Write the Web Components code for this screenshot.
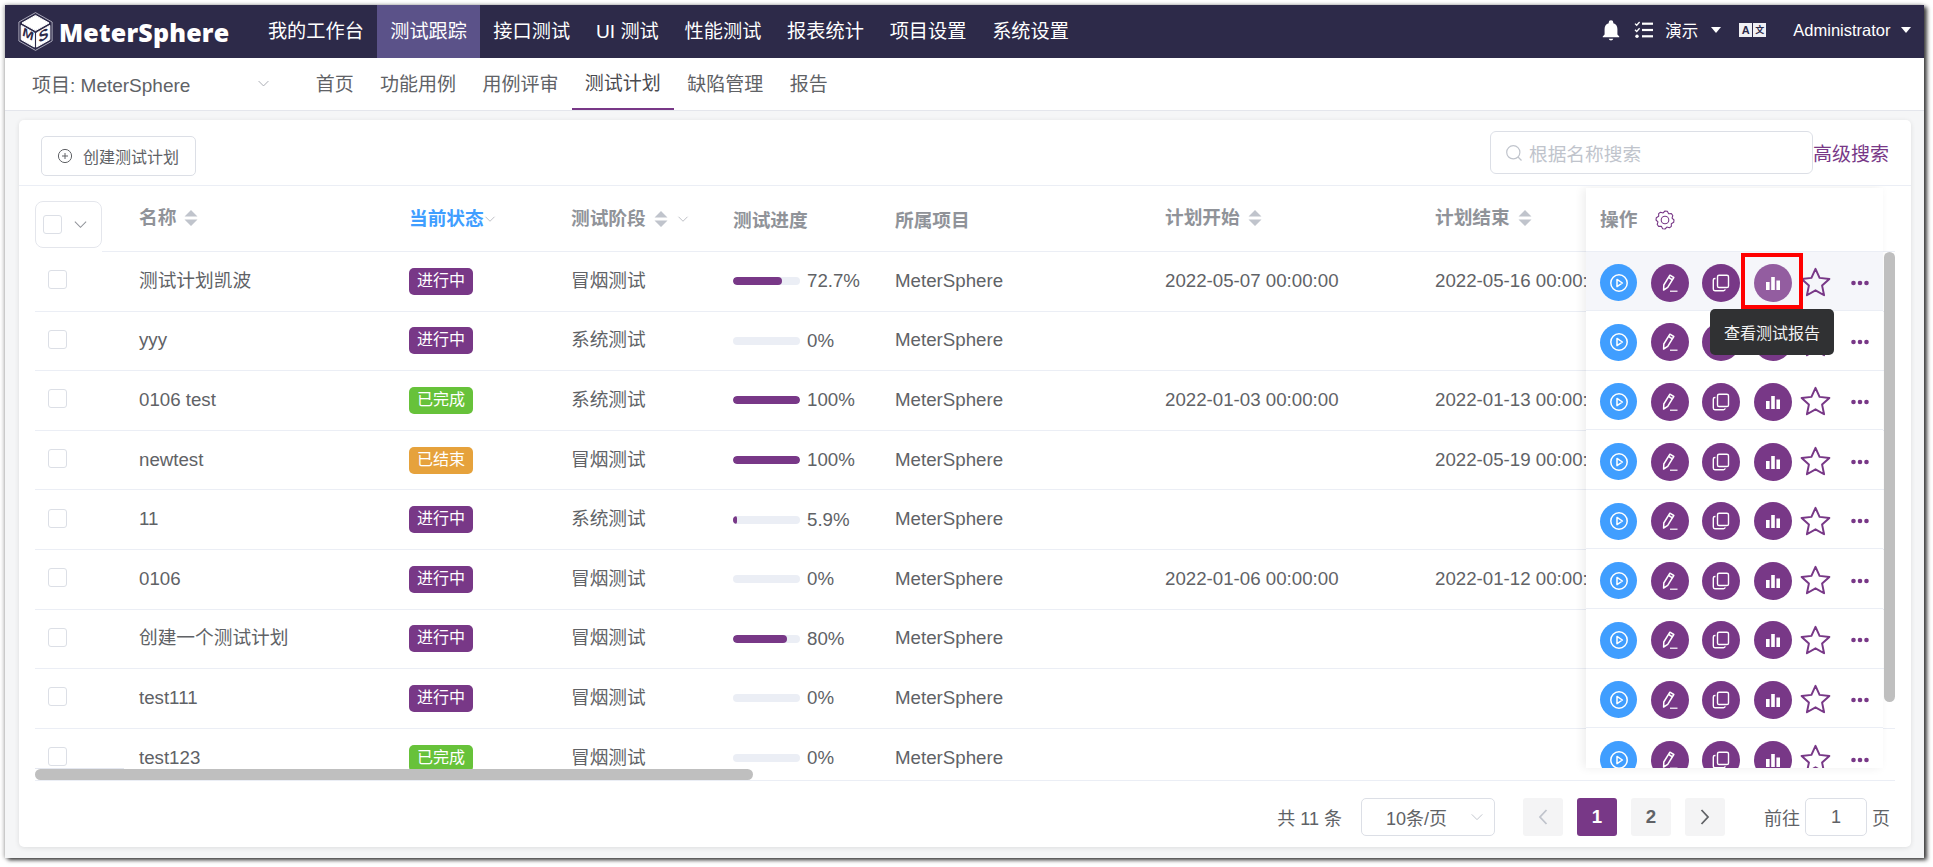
<!DOCTYPE html>
<html lang="zh">
<head>
<meta charset="utf-8">
<title>MeterSphere</title>
<style>
  html, body { margin: 0; height: 867px; overflow: hidden; background: #fff; }
  body { font-family: "Liberation Sans", "Noto Sans CJK SC", sans-serif; color: #606266; }
</style>
</head>
<body>
<ms-app></ms-app>
<script>
(function () {
  const PURPLE = '#783887';

  const chevron = (size, color) => `<svg width="${size}" height="${size}" viewBox="0 0 16 16" fill="none" stroke="${color}" stroke-width="1.1"><path d="M2 5l6 6 6-6"/></svg>`;
  const caret = `<svg width="14" height="16" viewBox="0 0 14 16" fill="#c0c4cc"><path d="M7 0l6.5 6.5H.5zM7 16L.5 9.5h13z"/></svg>`;
  const downTri = `<svg width="12" height="8" viewBox="0 0 12 8" fill="#fff"><path d="M1 1h10L6 7z"/></svg>`;

  const ICONS = {
    play: `<svg width="20" height="20" viewBox="0 0 20 20" fill="none" stroke="#fff" stroke-width="1.5"><circle cx="10" cy="10" r="8.2"/><path d="M8 6.4l5.4 3.6L8 13.6z" stroke-linejoin="round"/></svg>`,
    edit: `<svg width="22" height="22" viewBox="0 0 22 22" fill="none" stroke="#fff" stroke-width="1.5" stroke-linejoin="round"><path d="M4.6 18l.2-5L10.9 3.2l3.9 2.3L8.7 15.4z"/><path d="M9.6 5.5l3.9 2.3"/><path d="M11 19.2h7.5" stroke-width="1.2"/></svg>`,
    copy: `<svg width="20" height="20" viewBox="0 0 20 20" fill="none" stroke="#fff" stroke-width="1.4"><rect x="6.5" y="2.2" width="11" height="12.3" rx="1.6"/><path d="M4.5 5.5h-.6A1.6 1.6 0 0 0 2.3 7.1v9a1.6 1.6 0 0 0 1.6 1.6h8.6a1.6 1.6 0 0 0 1.6-1.5"/></svg>`,
    bars: `<svg width="18" height="18" viewBox="0 0 18 18" fill="#fff"><rect x="2" y="8" width="3.6" height="8"/><rect x="7.2" y="3" width="3.6" height="13"/><rect x="12.4" y="6.5" width="3.6" height="9.5"/></svg>`
  };

  const define = (name, css, html) => {
    class El extends HTMLElement {
      constructor() {
        super();
        this.attachShadow({mode: 'open'});
      }
      connectedCallback() {
        this.shadowRoot.innerHTML = `<style>${css}</style>${typeof html === 'function' ? html(this) : html}`;
      }
    }
    customElements.define(name, El);
  };

  define('ms-logo', `
    :host { display: flex; align-items: center; width: 250px; padding-left: 13px; box-sizing: border-box; }
    span { font: 800 25px "Open Sans", sans-serif; color: #fff; margin-left: 6px; letter-spacing: .2px; }
  `, `
    <svg width="35" height="39" viewBox="0 0 35 39">
      <path d="M17.5.6l16.6 9.4v19L17.5 38.4.9 29V10z" fill="none" stroke="#c9c8d6" stroke-width=".8"/>
      <path d="M17.5 3.4L31 11 17.5 18.6 4 11z" fill="#fff" stroke="#fff" stroke-linejoin="round"/>
      <path d="M3.2 13.4l13.2 7.5v14.2L3.2 27.6z" fill="#fff" stroke="#fff" stroke-linejoin="round"/>
      <path d="M31.8 13.4l-13.2 7.5v14.2l13.2-7.5z" fill="#fff" stroke="#fff" stroke-linejoin="round"/>
      <text transform="matrix(1 .55 0 1 4.4 23.6)" font-family="Liberation Sans" font-weight="700" font-style="italic" font-size="13" fill="#2d2a49">M</text>
      <text transform="matrix(1 -.55 0 1 20.6 31)" font-family="Liberation Sans" font-weight="700" font-size="15" fill="#2d2a49">S</text>
    </svg>
    <span>MeterSphere</span>
  `);

  define('ms-nav-item', `
    :host { display: flex; align-items: center; padding: 0 12.9px 3px; font-size: 19.2px; color: #fff; }
    :host([active]) { background: #5b5289; padding: 0 13.5px 3px; }
  `, `<slot></slot>`);

  define('ms-header', `
    :host { display: flex; height: 53px; background: #2d2a49; color: #fff; flex: none; }
    .right { margin-left: auto; display: flex; align-items: center; padding: 0 12.5px 3px 0; font-size: 16.5px; }
    .right > * { flex: none; }
    .boxes { display: flex; gap: 1px; margin-left: 17px; margin-right: 27px; }
    .boxes b { width: 13px; height: 14px; background: #f0f0f4; color: #2d2a49; font: 700 11px/14px "Liberation Sans", "Noto Sans CJK SC", sans-serif; text-align: center; display: block; }
    .boxes b + b { font-size: 9px; }
  `, `
    <ms-logo></ms-logo>
    <ms-nav-item>我的工作台</ms-nav-item>
    <ms-nav-item active>测试跟踪</ms-nav-item>
    <ms-nav-item>接口测试</ms-nav-item>
    <ms-nav-item>UI 测试</ms-nav-item>
    <ms-nav-item>性能测试</ms-nav-item>
    <ms-nav-item>报表统计</ms-nav-item>
    <ms-nav-item>项目设置</ms-nav-item>
    <ms-nav-item>系统设置</ms-nav-item>
    <div class="right">
      <svg width="22" height="24" viewBox="0 0 24 24" fill="#fff"><path d="M12 23.5a2.6 2.6 0 0 0 2.5-2h-5a2.6 2.6 0 0 0 2.5 2zM19 17v-6c0-3.1-1.6-5.6-4.5-6.3V3.9a2.5 2.5 0 0 0-5 0v.8C6.6 5.4 5 7.9 5 11v6l-2 2v1h18v-1z"/></svg>
      <svg style="margin-left:12px" width="20" height="20" viewBox="0 0 20 20" fill="#fff" stroke="none"><rect x="8" y="2.6" width="11" height="2.2"/><rect x="8" y="8.9" width="11" height="2.2"/><rect x="8" y="15.2" width="11" height="2.2"/><path d="M1 3.6l1.7 1.7L5.6 2M1 9.8l1.7 1.7 2.9-3.3" fill="none" stroke="#fff" stroke-width="1.3"/><circle cx="3" cy="16.3" r="1.7"/></svg>
      <span style="margin-left:11px">演示</span>
      <span style="margin-left:12px;display:flex">${downTri}</span>
      <div class="boxes"><b>A</b><b>文</b></div>
      <span>Administrator</span>
      <span style="margin-left:9px;display:flex">${downTri}</span>
    </div>
  `);

  define('ms-subnav-item', `
    :host { display: flex; align-items: center; padding: 0 13.2px 5px; font-size: 19px; color: #606266; box-sizing: border-box; height: 53px; }
    :host([active]) { color: #4a4a4f; border-bottom: 2px solid ${PURPLE}; padding-bottom: 3px; height: 52px; }
  `, `<slot></slot>`);

  define('ms-subnav', `
    :host { display: flex; height: 53px; background: #fff; flex: none; border-bottom: 1px solid #e4e6ec; box-sizing: border-box; }
    .project { width: 297.5px; flex: none; box-sizing: border-box; padding: 0 0 1px 27px; display: flex; align-items: center; font-size: 19px; color: #606266; }
    .project svg { margin-left: 67px; }
  `, `
    <div class="project"><span>项目: MeterSphere</span><svg width="13" height="13" viewBox="0 0 16 16" fill="none" stroke="#a8abb2" stroke-width="1.2"><path d="M2 5l6 6 6-6"/></svg></div>
    <ms-subnav-item>首页</ms-subnav-item>
    <ms-subnav-item>功能用例</ms-subnav-item>
    <ms-subnav-item>用例评审</ms-subnav-item>
    <ms-subnav-item active>测试计划</ms-subnav-item>
    <ms-subnav-item>缺陷管理</ms-subnav-item>
    <ms-subnav-item>报告</ms-subnav-item>
  `);

  define('ms-checkbox', `
    :host { display: block; width: 19px; height: 19px; box-sizing: border-box; border: 1px solid #dcdfe6; border-radius: 3px; background: #fff; flex: none; }
  `, ``);

  define('ms-badge', `
    :host { display: block; width: fit-content; height: 27px; line-height: 26px; padding: 0 8px; font-size: 16px; color: #fff; border-radius: 5px; background: ${PURPLE}; white-space: nowrap; }
    :host([kind="done"]) { background: #67c23a; }
    :host([kind="end"]) { background: #e6a23c; }
  `, `<slot></slot>`);

  define('ms-progress', `
    :host { display: flex; align-items: center; font-size: 18.7px; color: #606266; }
    .track { width: 67px; height: 8px; border-radius: 4px; background: #ebeef5; overflow: hidden; margin-right: 7px; }
    .fill { height: 100%; background: ${PURPLE}; border-radius: 4px; }
  `, el => `<div class="track"><div class="fill" style="width:${el.getAttribute('value')}%"></div></div><span>${el.getAttribute('value')}%</span>`);

  const COLS = '270px 162px 162px 162px 270px 270px 200px';

  define('ms-plan-head', `
    :host { display: flex; height: 66px; box-sizing: border-box; }
    .sel { width: 67px; flex: none; height: 47px; margin-top: 15px; box-sizing: border-box; border: 1px solid #e4e6ec; border-radius: 8px; display: flex; align-items: center; padding-left: 7px; gap: 11px; }
    .cols { flex: 1; display: grid; grid-template-columns: ${COLS}; padding-left: 37px; border-bottom: 1px solid #ebeef5; align-items: center; font-size: 18.7px; line-height: 24px; font-weight: 700; color: #909399; white-space: nowrap; height: 66px; box-sizing: border-box; }
    .c { display: flex; align-items: center; gap: 8px; margin-top: 1.5px; }
    .c svg { flex: none; }
    .blue { color: #409eff; gap: 0; }
    .up { margin-top: -2px; }
    .low { margin-top: 4px; }
  `, `
    <div class="sel"><ms-checkbox></ms-checkbox>${chevron(15, '#909399')}</div>
    <div class="cols">
      <div class="c up">名称 ${caret}</div>
      <div class="c blue">当前状态${chevron(12, '#b0b3ba')}</div>
      <div class="c">测试阶段 ${caret}<span style="display:flex;margin-left:1px">${chevron(12, '#b0b3ba')}</span></div>
      <div class="c low">测试进度</div>
      <div class="c low">所属项目</div>
      <div class="c up">计划开始 ${caret}</div>
      <div class="c up">计划结束 ${caret}</div>
    </div>
  `);

  define('ms-plan-row', `
    :host { display: grid; grid-template-columns: 104px ${COLS}; height: 59.6px; box-sizing: border-box; border-bottom: 1px solid #ebeef5; align-items: center; font-size: 18.7px; line-height: 24px; color: #606266; white-space: nowrap; }
    .chk { padding-left: 13px; margin-top: -3px; }
    .nm, .st { margin-top: -1px; }
  `, el => {
    const a = n => el.getAttribute(n) || '';
    return `
      <div class="chk"><ms-checkbox></ms-checkbox></div>
      <div class="nm">${a('name')}</div>
      <ms-badge kind="${a('kind')}">${a('status')}</ms-badge>
      <div class="st">${a('stage')}</div>
      <ms-progress value="${a('progress')}"></ms-progress>
      <div class="st">MeterSphere</div>
      <div class="st">${a('start')}</div>
      <div class="st">${a('end')}</div>`;
  });

  define('ms-op-btn', `
    :host { width: 38px; height: 38px; border-radius: 50%; background: ${PURPLE}; display: flex; align-items: center; justify-content: center; flex: none; }
    :host([kind="run"]) { background: #409eff; width: 37px; height: 37px; }
    :host([hover]) { background: #935da0; }
    svg { display: block; }
  `, el => ICONS[el.getAttribute('icon')]);

  define('ms-op-row', `
    :host { display: flex; align-items: center; gap: 13.5px; height: 59.6px; box-sizing: border-box; padding: 4px 0 0 14px; border-bottom: 1px solid #ebeef5; }
    :host([hover]) { background: #f5f6fa; }
    .star { margin: 0 0 0 -6px; flex: none; }
    .dots { margin-left: 4.5px; flex: none; }
    ms-op-btn:first-child { margin-right: 2.5px; }
  `, el => `
    <ms-op-btn kind="run" icon="play"></ms-op-btn>
    <ms-op-btn icon="edit"></ms-op-btn>
    <ms-op-btn icon="copy"></ms-op-btn>
    <ms-op-btn icon="bars" ${el.hasAttribute('hover') ? 'hover' : ''}></ms-op-btn>
    <svg class="star" width="33" height="33" viewBox="0 0 30 30" fill="none" stroke="${PURPLE}" stroke-width="1.8" stroke-linejoin="round"><path d="M15 2.6l3.7 8.2 8.9 1-6.6 6 1.8 8.8-7.8-4.5-7.8 4.5 1.8-8.8-6.6-6 8.9-1z"/></svg>
    <svg class="dots" width="20" height="6" viewBox="0 0 20 6" fill="${PURPLE}"><circle cx="3.5" cy="3" r="2.3"/><circle cx="10" cy="3" r="2.3"/><circle cx="16.5" cy="3" r="2.3"/></svg>
  `);

  // eight lobed cog outline, easier to compute than to type out
  const gearPath = (() => {
    const pts = [];
    for (let i = 0; i < 24; i++) {
      const a = (i / 24) * Math.PI * 2 - Math.PI / 2;
      const r = i % 3 === 2 ? 7.3 : 9;
      pts.push((10 + r * Math.cos(a)).toFixed(2) + ' ' + (10 + r * Math.sin(a)).toFixed(2));
    }
    return 'M' + pts.join('L') + 'z';
  })();
  const gear = `<svg width="20" height="20" viewBox="0 0 20 20" fill="none" stroke="${PURPLE}" stroke-width="1.1" stroke-linejoin="round"><path d="${gearPath}"/><circle cx="10" cy="10" r="3.8"/></svg>`;

  define('ms-op-panel', `
    :host { position: absolute; left: 1551px; top: 2px; width: 297px; height: 580px; background: #fff; box-shadow: -3px 0 9px rgba(0,0,0,.07); overflow: hidden; }
    .head { height: 63.5px; box-sizing: border-box; border-bottom: 1px solid #ebeef5; display: flex; align-items: center; padding: 2px 0 0 14px; gap: 18px; font-size: 18.7px; line-height: 24px; font-weight: 700; color: #909399; }
  `, () => {
    let rows = '<ms-op-row hover></ms-op-row>';
    for (let i = 0; i < 8; i++) rows += '<ms-op-row></ms-op-row>';
    return `<div class="head"><span>操作</span>${gear}</div>${rows}`;
  });

  define('ms-tooltip', `
    :host { position: absolute; left: 1675px; top: 123px; width: 124px; height: 46px; border-radius: 5px; background: #303133; color: #f2f2f2; font-size: 16px; display: flex; align-items: center; justify-content: center; white-space: nowrap; }
  `, `<slot></slot>`);

  const PLANS = [
    ['测试计划凯波', '进行中', '', '冒烟测试', 72.7, '2022-05-07 00:00:00', '2022-05-16 00:00:00'],
    ['yyy', '进行中', '', '系统测试', 0, '', ''],
    ['0106 test', '已完成', 'done', '系统测试', 100, '2022-01-03 00:00:00', '2022-01-13 00:00:00'],
    ['newtest', '已结束', 'end', '冒烟测试', 100, '', '2022-05-19 00:00:00'],
    ['11', '进行中', '', '系统测试', 5.9, '', ''],
    ['0106', '进行中', '', '冒烟测试', 0, '2022-01-06 00:00:00', '2022-01-12 00:00:00'],
    ['创建一个测试计划', '进行中', '', '冒烟测试', 80, '', ''],
    ['test111', '进行中', '', '冒烟测试', 0, '', ''],
    ['test123', '已完成', 'done', '冒烟测试', 0, '', '']
  ];

  define('ms-plan-table', `
    :host { display: block; position: relative; height: 595px; margin: 0 16px; border-bottom: 1px solid #ebeef5; box-sizing: border-box; overflow: hidden; flex: none; }
    .hbar { position: absolute; left: 0; bottom: 0; width: 718px; height: 11px; border-radius: 6px; background: #bfbfbf; }
    .vbar { position: absolute; left: 1849px; top: 66px; width: 11px; height: 450px; border-radius: 6px; background: #bfbfbf; }
    .fixline { position: absolute; left: 0; top: 582px; width: 89px; height: 1px; background: #e4e7ef; }
    .mark { position: absolute; left: 1706px; top: 67px; width: 62px; height: 56px; box-sizing: border-box; border: 4px solid #f00; }
    .hide { position: absolute; left: 0; top: 583px; width: 104px; height: 13px; background: #fff; }
  `, () => `
    <ms-plan-head></ms-plan-head>
    ${PLANS.map(p => `<ms-plan-row name="${p[0]}" status="${p[1]}" kind="${p[2]}" stage="${p[3]}" progress="${p[4]}" start="${p[5]}" end="${p[6]}"></ms-plan-row>`).join('')}
    <ms-op-panel></ms-op-panel>
    <div class="hide"></div>
    <div class="fixline"></div>
    <div class="hbar"></div>
    <div class="vbar"></div>
    <div class="mark"></div>
    <ms-tooltip>查看测试报告</ms-tooltip>
  `);

  define('ms-toolbar', `
    :host { display: flex; height: 66px; box-sizing: border-box; border-bottom: 1px solid #ebeef5; padding: 0 0 0 22px; flex: none; }
    .create { width: 155px; height: 40px; margin-top: 16px; box-sizing: border-box; border: 1px solid #dcdfe6; border-radius: 5px; display: flex; align-items: center; padding-left: 15px; gap: 10px; font-size: 16px; color: #606266; white-space: nowrap; }
    .search { margin-left: auto; width: 323px; height: 43px; margin-top: 11px; box-sizing: border-box; border: 1px solid #dcdfe6; border-radius: 6px; display: flex; align-items: center; padding-left: 14px; gap: 6px; font-size: 18.7px; color: #c0c4cc; }
    .adv { font-size: 19px; color: ${PURPLE}; margin: 24px 22px 0 0; line-height: 22px; white-space: nowrap; }
  `, `
    <div class="create"><svg width="16" height="16" viewBox="0 0 16 16" fill="none" stroke="#606266" stroke-width="1"><circle cx="8" cy="8" r="6.6"/><path d="M8 5v6M5 8h6"/></svg><span>创建测试计划</span></div>
    <div class="search"><svg width="18" height="18" viewBox="0 0 18 18" fill="none" stroke="#c0c4cc" stroke-width="1.2"><circle cx="8.3" cy="8.3" r="6.6"/><path d="M13 13l3.5 3.5"/></svg><span>根据名称搜索</span></div>
    <div class="adv">高级搜索</div>
  `);

  define('ms-page-btn', `
    :host { width: 40px; height: 38px; border-radius: 3px; background: #f4f4f5; color: #606266; font-size: 18.7px; font-weight: 700; display: flex; align-items: center; justify-content: center; flex: none; }
    :host([active]) { background: ${PURPLE}; color: #fff; }
  `, `<slot></slot>`);

  define('ms-pagination', `
    :host { display: flex; align-items: center; justify-content: flex-end; height: 38px; margin-top: 17px; padding-right: 21px; font-size: 18px; color: #606266; flex: none; }
    .select { width: 134px; height: 38px; box-sizing: border-box; border: 1px solid #dcdfe6; border-radius: 5px; display: flex; align-items: center; padding-left: 24px; gap: 23px; margin: 0 28px 0 19px; white-space: nowrap; }
    .btns { display: flex; gap: 14px; margin-right: 39px; }
    .input { width: 62px; height: 38px; box-sizing: border-box; border: 1px solid #dcdfe6; border-radius: 5px; display: flex; align-items: center; justify-content: center; margin: 0 5px; }
  `, `
    <span>共 11 条</span>
    <div class="select"><span>10条/页</span>${chevron(14, '#c0c4cc')}</div>
    <div class="btns">
      <ms-page-btn><svg width="12" height="18" viewBox="0 0 12 18" fill="none" stroke="#c0c4cc" stroke-width="1.8"><path d="M9.5 2L3 9l6.5 7"/></svg></ms-page-btn>
      <ms-page-btn active>1</ms-page-btn>
      <ms-page-btn>2</ms-page-btn>
      <ms-page-btn><svg width="12" height="18" viewBox="0 0 12 18" fill="none" stroke="#606266" stroke-width="1.8"><path d="M2.5 2L9 9l-6.5 7"/></svg></ms-page-btn>
    </div>
    <span>前往</span>
    <div class="input">1</div>
    <span>页</span>
  `);

  define('ms-card', `
    :host { display: flex; flex-direction: column; height: 727px; margin: 9px 13px 0 14px; background: #fff; border-radius: 5px; box-shadow: 0 1px 5px rgba(0,0,0,.1); overflow: hidden; flex: none; }
  `, `<slot></slot>`);

  define('ms-app', `
    :host { display: flex; flex-direction: column; width: 1919px; height: 853px; margin: 5px 0 0 5px; background: #f5f6f7; box-shadow: 3px 2px 4px rgba(0,0,0,.75), -1px 0 4px rgba(0,0,0,.3); overflow: hidden; }
  `, `
    <ms-header></ms-header>
    <ms-subnav></ms-subnav>
    <ms-card>
      <ms-toolbar></ms-toolbar>
      <ms-plan-table></ms-plan-table>
      <ms-pagination></ms-pagination>
    </ms-card>
  `);
})();
</script>
</body>
</html>
